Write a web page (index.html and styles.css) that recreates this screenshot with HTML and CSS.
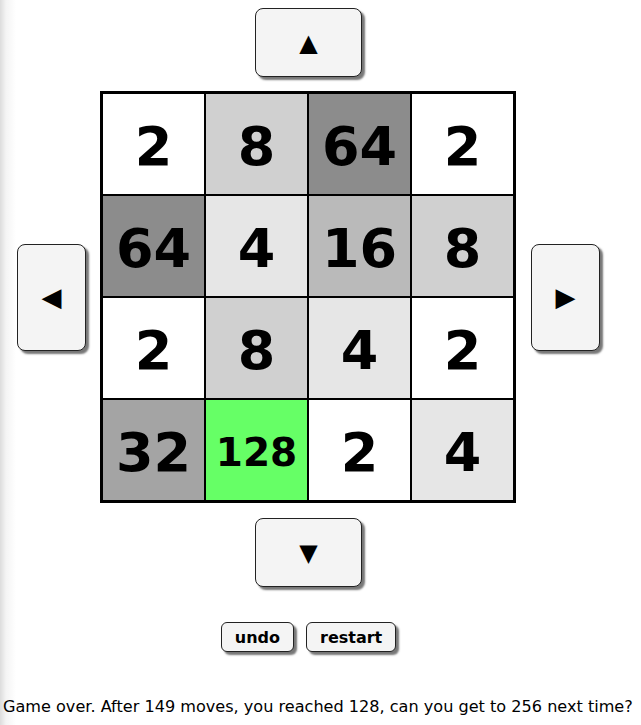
FILE: index.html
```html
<!DOCTYPE html>
<html lang="en">
<head>
  <meta charset="UTF-8" />
  <title>2048</title>
  <link rel="stylesheet" href="styles.css">
</head>
<body>
  <div class="game">
    <div class="row-center">
      <button class="arrow horiz" aria-label="up">&#9650;</button>
    </div>
    <div class="middle">
      <button class="arrow vert" aria-label="left">&#9664;</button>
      <div class="board">
        <div class="cell t2">2</div>
        <div class="cell t8">8</div>
        <div class="cell t64">64</div>
        <div class="cell t2">2</div>

        <div class="cell t64">64</div>
        <div class="cell t4">4</div>
        <div class="cell t16">16</div>
        <div class="cell t8">8</div>

        <div class="cell t2">2</div>
        <div class="cell t8">8</div>
        <div class="cell t4">4</div>
        <div class="cell t2">2</div>

        <div class="cell t32">32</div>
        <div class="cell t128">128</div>
        <div class="cell t2">2</div>
        <div class="cell t4">4</div>
      </div>
      <button class="arrow vert" aria-label="right">&#9654;</button>
    </div>
    <div class="row-center">
      <button class="arrow horiz" aria-label="down">&#9660;</button>
    </div>
    <div class="controls">
      <button class="small">undo</button>
      <button class="small">restart</button>
    </div>
  </div>
  <p class="status">Game over. After 149 moves, you reached 128, can you get to 256 next time?</p>
</body>
</html>
```

FILE: styles.css
```css
body {
  margin: 0;
  font-family: "DejaVu Sans", Verdana, sans-serif;
  background: linear-gradient(to right, #dcdcdc 0, #f4f4f4 6px, #fff 16px);
  color: #000;
  min-height: 725px;
}
.game {
  width: 583px;
  margin-left: 17px;
  padding-top: 8px;
}
.row-center {
  display: flex;
  justify-content: center;
}
button {
  font-family: inherit;
  background: #f4f4f4;
  border: 1px solid #222;
  border-radius: 8px;
  box-shadow: 3px 3px 2px #777;
  color: #000;
  cursor: pointer;
  padding: 0;
}
.arrow {
  font-size: 26px;
  line-height: 1;
}
.arrow.horiz {
  width: 107px;
  height: 69px;
  font-size: 24px;
}
.arrow.vert {
  width: 69px;
  height: 107px;
}
.middle {
  display: flex;
  align-items: center;
  gap: 14px;
  margin: 14px 0 15px;
}
.middle .board {
  margin-right: 1px;
}
.board {
  display: grid;
  grid-template-columns: repeat(4, 101px);
  grid-template-rows: repeat(4, 100px);
  gap: 2px;
  background: #000;
  border: 3px solid #000;
}
.cell {
  display: flex;
  align-items: center;
  justify-content: center;
  font-weight: bold;
  font-size: 54px;
  padding-top: 4px;
  box-sizing: border-box;
}
.t2 { background: #fff; }
.t4 { background: #e6e6e6; }
.t8 { background: #d0d0d0; }
.t16 { background: #bababa; }
.t32 { background: #a4a4a4; }
.t64 { background: #8c8c8c; }
.t128 { background: #66ff66; font-size: 39px; }
.controls {
  display: flex;
  justify-content: center;
  gap: 12px;
  margin-top: 35px;
}
.small {
  font-size: 16px;
  font-weight: bold;
  height: 30px;
  padding: 0 13px;
  border-radius: 6px;
}
.status {
  margin: 45px 0 0 3px;
  font-size: 16.1px;
  white-space: nowrap;
}
```
